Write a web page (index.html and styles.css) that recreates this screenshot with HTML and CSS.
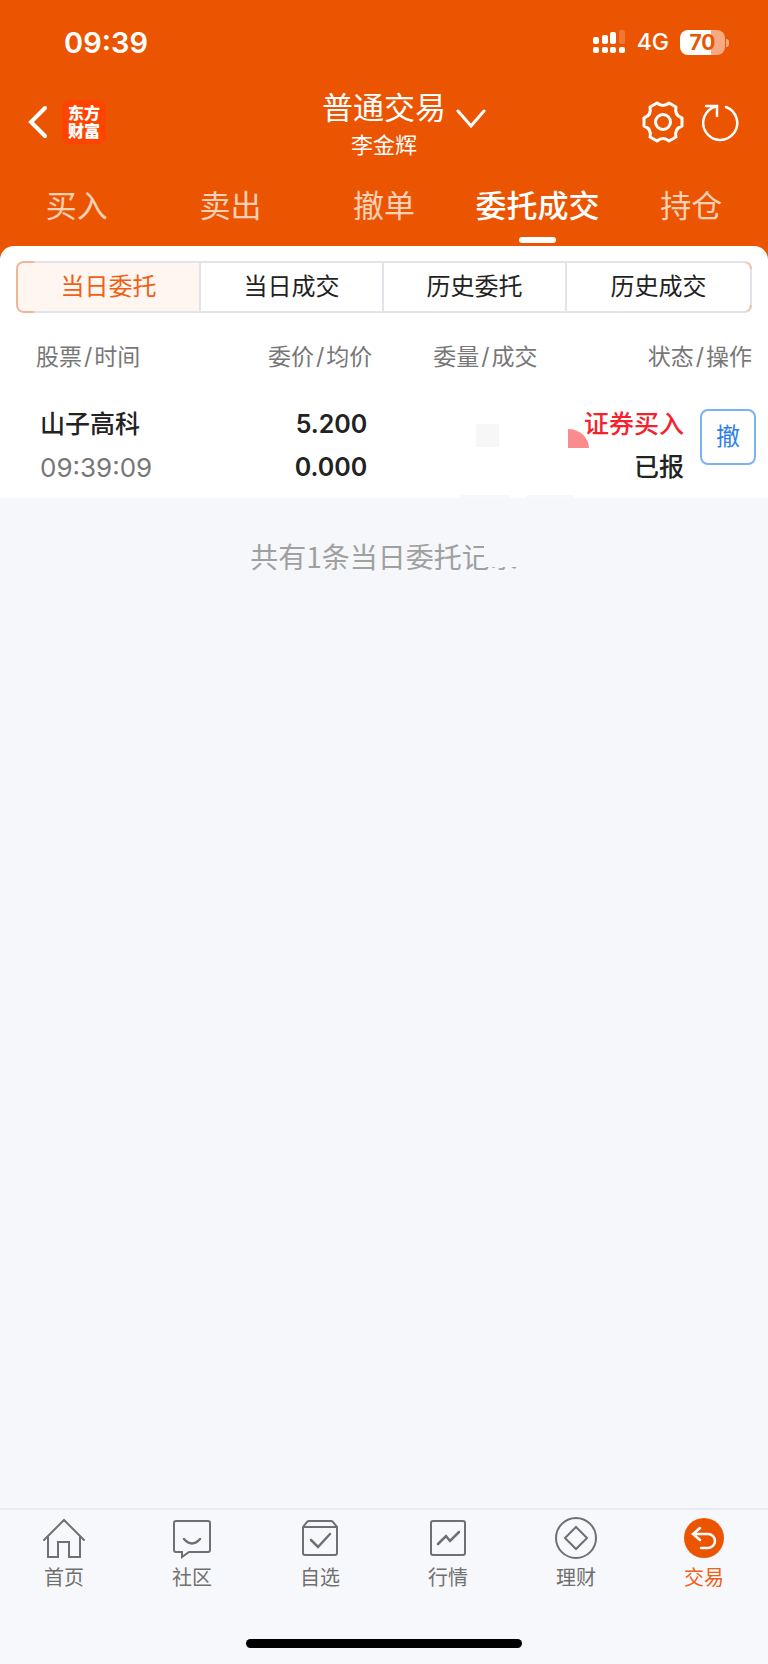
FILE: index.html
```html
<!DOCTYPE html>
<html lang="zh-CN">
<head>
	<title>委托成交</title>
	<meta charset="utf-8">
	<meta name="viewport" content="width=device-width, initial-scale=1">
	<link rel="stylesheet" href="styles.css">
</head>
<body>
	<header class="header">
		<div class="status">
			<span class="time">09:39</span>
			<div class="status-right">
				<svg width="34" height="24" viewBox="0 0 34 24" fill="#fff">
					<rect x="1" y="7" width="6" height="7" rx="2"/>
					<rect x="10" y="5" width="6" height="9" rx="2"/>
					<rect x="18" y="2" width="6" height="12" rx="2"/>
					<rect x="27" y="0" width="6" height="14" rx="2" opacity=".2"/>
					<rect x="1" y="17" width="6" height="6" rx="2"/>
					<rect x="10" y="17" width="6" height="6" rx="2"/>
					<rect x="18" y="17" width="6" height="6" rx="2"/>
					<rect x="27" y="17" width="6" height="6" rx="2"/>
				</svg>
				<span class="network">4G</span>
				<span class="battery">70</span>
			</div>
		</div>
		<div class="topbar">
			<div class="topbar-left">
				<a href="#" class="back" aria-label="返回">
					<svg width="20" height="34" viewBox="0 0 20 34" fill="none" stroke="#fff" stroke-width="4" stroke-linecap="round"><path d="M17 3L3 17l14 14" stroke-linejoin="miter"/></svg>
				</a>
				<span class="logo">东方<br>财富</span>
			</div>
			<div class="account">
				<h1 class="title">普通交易</h1>
				<p class="name">李金辉</p>
			</div>
			<div class="topbar-right">
				<button class="icon-btn arrow" aria-label="切换账户">
					<svg width="30" height="20" viewBox="0 0 30 20" fill="none" stroke="#fff" stroke-width="3" stroke-linecap="round"><path d="M2 2l13 15L28 2"/></svg>
				</button>
				<button class="icon-btn" aria-label="设置">
					<svg width="42" height="42" viewBox="0 0 42 42" fill="none" stroke="#fff" stroke-width="3" stroke-linejoin="round">
						<path d="M15 2Q21 7 27 2L34 6Q32 14 40 17V25Q32 28 34 36L27 40Q21 35 15 40L8 36Q10 28 2 25V17Q10 14 8 6Z"/>
						<circle cx="21" cy="21" r="7.5"/>
					</svg>
				</button>
				<button class="icon-btn" aria-label="刷新">
					<svg width="38" height="40" viewBox="0 0 38 40" fill="none" stroke="#fff" stroke-width="2.5" stroke-linecap="round"><path d="M24 5A17 17 0 1 1 14 4.500M4 4h11v10"/></svg>
				</button>
			</div>
		</div>
		<nav class="tabs">
			<a href="#">买入</a>
			<a href="#">卖出</a>
			<a href="#">撤单</a>
			<a href="#" class="active">委托成交</a>
			<a href="#">持仓</a>
		</nav>
	</header>

	<main class="panel">
		<div class="segment">
			<button class="active">当日委托</button>
			<button>当日成交</button>
			<button>历史委托</button>
			<button>历史成交</button>
		</div>
		<table class="orders">
			<thead>
				<tr>
					<th class="col-stock">股票<span>/</span>时间</th>
					<th class="col-price">委价<span>/</span>均价</th>
					<th class="col-amount">委量<span>/</span>成交</th>
					<th class="col-state">状态<span>/</span>操作</th>
				</tr>
			</thead>
			<tbody>
				<tr>
					<td class="col-stock"><b>山子高科</b><span class="order-time">09:39:09</span></td>
					<td class="col-price"><b>5.200</b><b>0.000</b></td>
					<td class="col-amount"><i class="block"></i></td>
					<td class="col-state">
						<div class="state">
							<div class="state-text"><b class="buy">证券买入</b><b>已报</b></div>
							<button class="cancel">撤</button>
						</div>
					</td>
				</tr>
			</tbody>
		</table>
	</main>
	<p class="total"><span>共有1条当日委托记录</span></p>

	<footer class="footer">
		<nav class="menu">
			<a href="#">
				<svg viewBox="0 0 44 44"><path d="M2 23L22 3l20 20M6 20v20h10V25h11v15h11V20"/></svg>
				首页
			</a>
			<a href="#">
				<svg viewBox="0 0 44 44"><path d="M6 4h32q2 0 2 2v27q0 2-2 2H19l-7 5v-5H6q-2 0-2-2V6q0-2 2-2z"/><path d="M14 22q8 9 16 0" stroke-width="2.500"/></svg>
				社区
			</a>
			<a href="#">
				<svg viewBox="0 0 44 44"><path d="M5 10h34v26q0 2-2 2H7q-2 0-2-2V10l4-5q1-1 2-1h22q1 0 2 1l4 5"/><path d="M13 23l7 7 12-13" stroke-width="2.500"/></svg>
				自选
			</a>
			<a href="#">
				<svg viewBox="0 0 44 44"><rect x="5" y="4" width="34" height="34" rx="2"/><path d="M12 27l8-8 4 5 9-9" stroke-width="2.500"/></svg>
				行情
			</a>
			<a href="#">
				<svg viewBox="0 0 44 44"><circle cx="22" cy="21" r="20"/><path d="M22 10l11 11-11 11-11-11z"/></svg>
				理财
			</a>
			<a href="#" class="active">
				<svg viewBox="0 0 44 44"><circle cx="22" cy="21" r="20" fill="#eb5502" stroke="none"/><path d="M18 11l-7 6 7 6M11 17h15a7 7 0 0 1 0 14h-7" stroke="#fff" stroke-width="2.500"/></svg>
				交易
			</a>
		</nav>
		<div class="home-bar"></div>
	</footer>
</body>
</html>
```
FILE: styles.css
```css
* {
	box-sizing: border-box;
}
body {
	display: flex;
	flex-direction: column;
	min-height: 100vh;
	margin: 0;
	font-family: Inter, "Noto Sans CJK SC", sans-serif;
	color: #222;
	background-color: #f5f7fa;
}
a {
	color: inherit;
	text-decoration: none;
}
button {
	padding: 0;
	border: 0;
	font: inherit;
	color: inherit;
	background: none;
}
svg {
	display: block;
}
h1, p {
	margin: 0;
	font-weight: normal;
}

/* header */
.header {
	padding-bottom: 16px;
	color: #fff;
	background-color: #eb5502;
}
.status {
	display: flex;
	justify-content: space-between;
	align-items: center;
	height: 84px;
	padding: 0 43px 0 64px;
}
.time {
	font-size: 29px;
	font-weight: 600;
}
.status-right {
	display: flex;
	align-items: center;
	gap: 11px;
}
.network {
	font-size: 23px;
	font-weight: 500;
}
.battery {
	position: relative;
	width: 45px;
	border-radius: 8px;
	font-size: 21px;
	font-weight: 700;
	line-height: 25px;
	text-align: center;
	color: #eb5502;
	background: linear-gradient(90deg, #fff 70%, #f5aa81 70%);
}
.battery::after {
	content: "";
	position: absolute;
	top: 9px;
	right: -4px;
	width: 3px;
	height: 8px;
	border-radius: 0 3px 3px 0;
	background-color: #f5aa81;
}
.topbar {
	display: grid;
	grid-template-columns: 1fr auto 1fr;
	align-items: center;
	height: 76px;
	padding: 0 28px;
}
.topbar-left, .topbar-right {
	display: flex;
	align-items: center;
	gap: 14px;
}
.topbar-right {
	gap: 18px;
}
.logo {
	width: 44px;
	padding: 4px 0;
	border-radius: 8px;
	font-size: 16px;
	font-weight: 900;
	line-height: 18px;
	text-align: center;
	background-color: #ff4400;
}
.account {
	text-align: center;
}
.title {
	font-size: 31px;
	line-height: 46px;
}
.name {
	font-size: 22px;
	line-height: 28px;
}
.arrow {
	margin: 0 auto 6px 10px;
}
.tabs {
	display: grid;
	grid-template-columns: repeat(5, 1fr);
	padding-top: 26px;
	font-size: 31px;
	line-height: 40px;
	text-align: center;
	color: #fbd0b5;
}
.tabs .active {
	font-weight: 500;
	color: #fff;
}
.tabs .active::after {
	content: "";
	display: block;
	width: 37px;
	height: 6px;
	margin: 11px auto 3px;
	border-radius: 3px;
	background-color: #fff;
}

/* orders */
.panel {
	margin-top: -16px;
	padding-top: 15px;
	border-radius: 14px 14px 0 0;
	background:
		linear-gradient(#f7f8fa, #f7f8fa) 64% 100% / 50px 3px no-repeat,
		linear-gradient(#f7f8fa, #f7f8fa) 73% 100% / 48px 3px no-repeat,
		#fff;
}
.segment {
	display: grid;
	grid-template-columns: repeat(4, 1fr);
	margin: 0 16px;
	border: 2px solid transparent;
	border-radius: 8px;
	font-size: 24px;
	line-height: 48px;
	background:
		linear-gradient(#fff, #fff) padding-box,
		linear-gradient(#e3e4ea, #e3e4ea) right center / 2px calc(100% - 16px) no-repeat border-box,
		linear-gradient(90deg, #f0b595 16px, #e3e4ea 20px, #e3e4ea calc(100% - 8px), #f0b595) border-box;
}
.segment button {
	border-right: 2px solid #e3e4ea;
}
.segment button:last-child {
	border-right: 0;
}
.segment .active {
	border-radius: 6px 0 0 6px;
	color: #f06014;
	background-color: #fff5f1;
}
.orders {
	width: 100%;
	border-collapse: collapse;
	table-layout: fixed;
	font-size: 26px;
	line-height: 43px;
	text-align: right;
}
.orders th {
	padding: 27px 0 17px;
	font-size: 23px;
	font-weight: normal;
	line-height: 34px;
	color: #777;
}
.orders th span {
	margin: 0 2px;
}
.orders td {
	padding: 12px 0 9px;
	vertical-align: top;
}
.orders b {
	display: block;
	font-size: 25px;
	font-weight: 500;
}
.orders .col-stock {
	width: 25%;
	padding-left: 40px;
	text-align: left;
}
.orders th.col-stock {
	padding-left: 36px;
}
.orders .col-price {
	width: 24%;
	padding-right: 9px;
}
.orders td.col-price b {
	font-weight: 600;
}
.orders th.col-price {
	padding-right: 4px;
}
.orders .col-amount {
	width: 21%;
}
.orders .col-state {
	padding-right: 12px;
}
.orders th.col-state {
	padding-right: 16px;
}
.order-time {
	color: #777;
}
.block {
	display: block;
	width: 23px;
	height: 23px;
	margin: 21px 39px 0 auto;
	background-color: #f7f7f7;
}
.state {
	display: flex;
	justify-content: flex-end;
	align-items: flex-start;
	gap: 16px;
}
.state-text {
	position: relative;
}
.orders .buy {
	color: #f5222d;
}
.state-text::before {
	content: "";
	position: absolute;
	top: 26px;
	left: -16px;
	width: 21px;
	height: 19px;
	border-radius: 0 100% 0 0;
	background-color: #fa8c8e;
}
.cancel {
	width: 56px;
	height: 56px;
	margin-top: 6px;
	border: 2px solid #7db1f5;
	border-radius: 8px;
	font-size: 24px;
	line-height: 52px;
	color: #2f7fe6;
}
.total {
	padding: 37px 0 35px;
	font-family: "Noto Sans CJK SC", sans-serif;
	font-size: 28px;
	line-height: 42px;
	text-align: center;
	color: #a0a0a0;
}
.total span {
	position: relative;
}
/* hides the end of the line */
.total span::after {
	content: "";
	position: absolute;
	top: 0;
	right: 0;
	width: 34px;
	height: 31px;
	background-color: #f5f7fa;
}

/* bottom menu */
.footer {
	margin-top: auto;
	padding-bottom: 16px;
	border-top: 2px solid #e9ebf0;
	background-color: #f7f8fb;
}
.menu {
	display: grid;
	grid-template-columns: repeat(6, 1fr);
	font-size: 20px;
	line-height: 30px;
	text-align: center;
	color: #707070;
}
.menu svg {
	width: 44px;
	height: 44px;
	margin: 7px auto 2px;
	fill: none;
	stroke: #707070;
	stroke-width: 2;
	stroke-linecap: round;
}
.menu .active {
	color: #f06014;
}
.home-bar {
	width: 36%;
	height: 9px;
	margin: 46px auto 0;
	border-radius: 5px;
	background-color: #000;
}
```
